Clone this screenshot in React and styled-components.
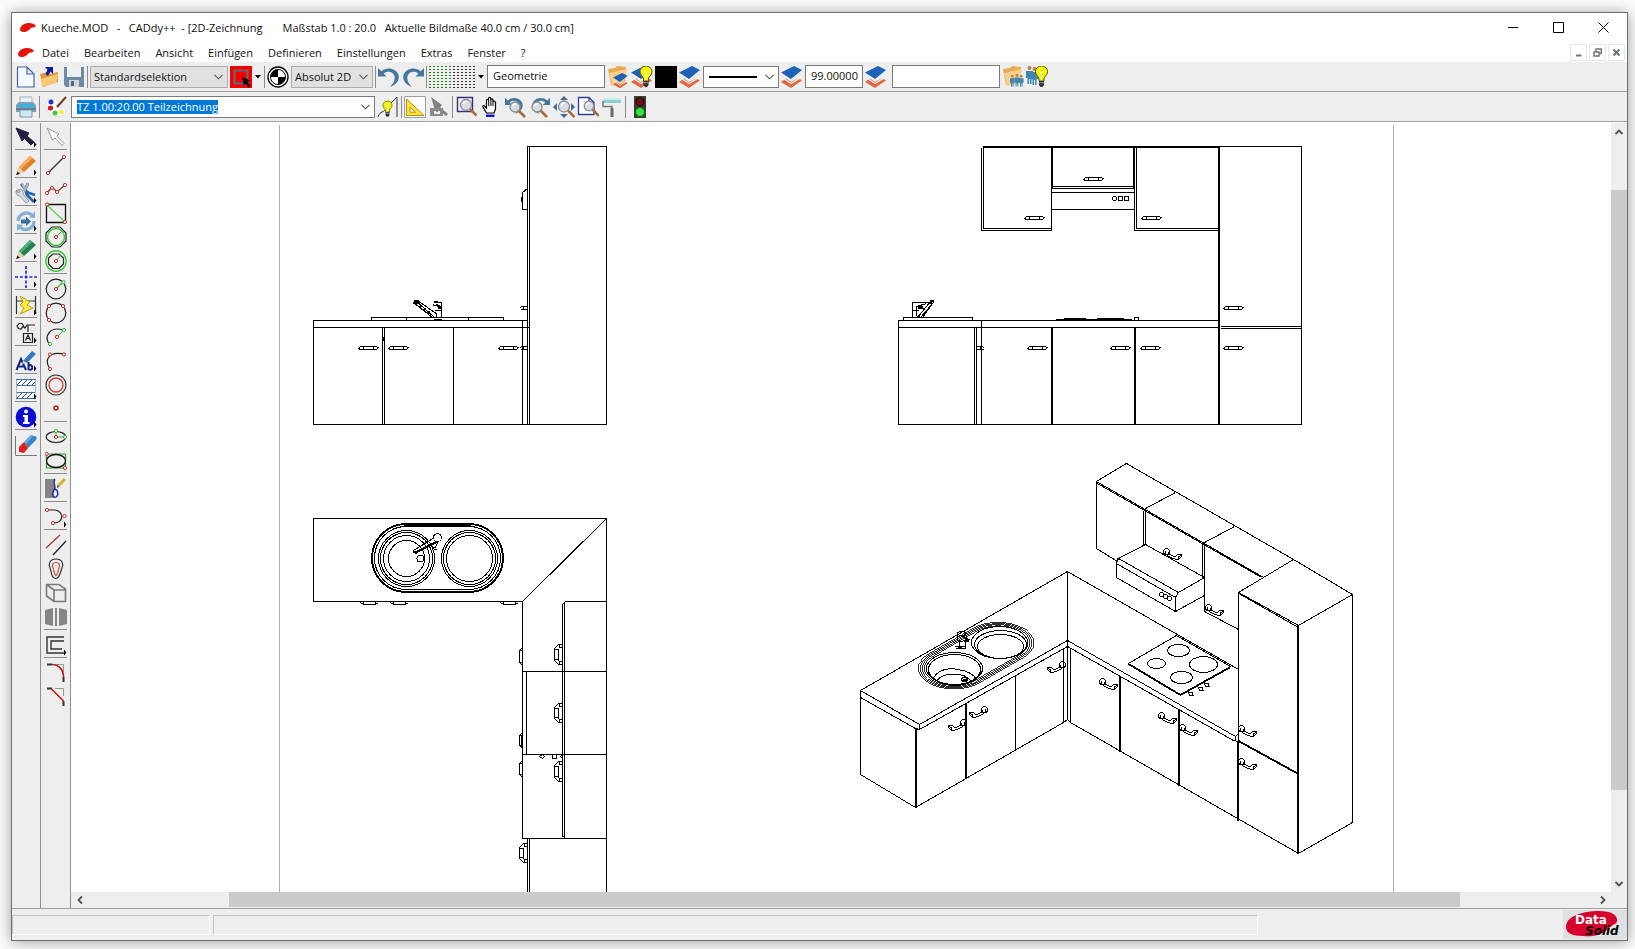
import React from 'react';
import styled, { createGlobalStyle } from 'styled-components';

const GlobalStyle = createGlobalStyle`
  *, *::before, *::after { box-sizing: border-box; }
  html, body, #root { height: 100%; }
  body {
    margin: 0;
    background: #fcfcfc;
    color: #111;
    font: 11px/16px 'Open Sans', 'Noto Sans', sans-serif;
    overflow: hidden;
  }
  button, input, select { font: inherit; color: inherit; }
`;

/* ---------- window frame ---------- */

const Desktop = styled.div`
  height: 100%;
  padding: 12px 7px 8px 11px;
`;

const Window = styled.main`
  height: 100%;
  display: flex;
  flex-direction: column;
  background: #eee;
  border: 1px solid #6e6e6e;
  box-shadow: 0 1px 14px rgba(0, 0, 0, 0.38);
`;

const TitleBar = styled.header`
  display: flex;
  align-items: center;
  height: 30px;
  padding: 0 1px 1px 8px;
  gap: 5px;
  background: #fff;
`;

const Title = styled.h1`
  margin: 0;
  flex: 1;
  font-size: 11px;
  font-weight: 400;
  white-space: pre;
`;

const CaptionButtons = styled.div`
  display: flex;
`;

const CaptionButton = styled.button`
  width: 45px;
  height: 28px;
  padding: 0;
  border: 0;
  background: none;
  display: grid;
  place-items: center;
`;

const MenuBar = styled.nav`
  display: flex;
  align-items: center;
  height: 19px;
  gap: 1px;
  padding: 0 2px 0 6px;
  background: #fff;
`;

const MenuItem = styled.button`
  padding: 0 7px;
  border: 0;
  background: none;
  white-space: nowrap;
`;

const MdiButtons = styled.div`
  display: flex;
  gap: 2px;
  margin-left: auto;
`;

const MdiButton = styled.button`
  width: 17px;
  height: 17px;
  padding: 0;
  border: 1px solid #e6e9ec;
  background: #fff;
  display: grid;
  place-items: center;
`;

/* ---------- toolbars ---------- */

const Toolbar = styled.div`
  display: flex;
  align-items: center;
  gap: 2px;
  height: 30px;
  padding-left: 3px;
  border-bottom: 1px solid #a0a0a0;
`;

const Tool = styled.button`
  flex: none;
  width: ${p => p.$width || 22}px;
  height: 22px;
  padding: 0;
  border: 0;
  background: ${p => p.$fill || 'none'};
  display: grid;
  place-items: center;
  svg { display: block; }
`;

const Separator = styled.span`
  flex: none;
  width: 1px;
  height: 22px;
  background: #8c8c8c;
`;

const Spacer = styled.span`
  width: 1px;
`;

const SelectBox = styled.span`
  position: relative;
  flex: none;
  display: flex;
  align-items: center;
  width: ${p => p.$width}px;
  height: 22px;
  border: 1px solid ${p => (p.$plain ? '#7a7a7a' : '#adadad')};
  background: ${p => (p.$plain ? '#fff' : '#e1e1e1')};
`;

const Select = styled.select`
  appearance: none;
  width: 100%;
  height: 20px;
  padding: 0 18px 0 3px;
  border: 0;
  background: none;
  outline: none;
`;

const SelectMark = styled.svg`
  position: absolute;
  right: 4px;
  top: 7px;
  pointer-events: none;
`;

const LineSample = styled.svg`
  position: absolute;
  left: 5px;
  top: 9px;
  pointer-events: none;
`;

const ComboInput = styled.input`
  field-sizing: content;
  height: 14px;
  margin-left: 5px;
  padding: 0;
  border: 0;
  outline: none;
  background: #0078d7;
  color: #fff;
  line-height: 14px;
`;

const Field = styled.input`
  flex: none;
  width: ${p => p.$width}px;
  height: 23px;
  padding: 0 0 2px 5px;
  border: 1px solid #7a7a7a;
  background: #fff;
`;

/* ---------- work area ---------- */

const WorkArea = styled.div`
  flex: 1;
  min-height: 0;
  display: flex;
  border-top: 1px solid #fff;
`;

const ToolColumn = styled.div`
  flex: none;
  width: ${p => p.$width}px;
  padding: 2px 3px 0;
  border-right: 1px solid #8f8f8f;
  display: flex;
  flex-direction: column;
`;

const SideTool = styled.button`
  flex: none;
  height: ${p => (p.$divided ? 28 : 24)}px;
  padding: 0 0 ${p => (p.$divided ? 4 : 0)}px;
  border: 0;
  background: ${p => (p.$divided ? 'linear-gradient(#8c8c8c, #8c8c8c) 0 24px / 100% 1px no-repeat' : 'none')};
  display: grid;
  place-items: center;
  svg { display: block; }
`;

const View = styled.section`
  flex: 1;
  min-width: 0;
  display: grid;
  grid-template: minmax(0, 1fr) 16px / minmax(0, 1fr) 16px;
`;

const Canvas = styled.div`
  background: #fff;
  overflow: hidden;
  svg { display: block; width: 100%; height: 100%; }
`;

const ScrollV = styled.div`
  display: grid;
  grid-template-rows: 17px 50fr 600fr 85fr 17px;
`;

const ScrollH = styled.div`
  display: grid;
  grid-template-columns: 17px 141fr 1231fr 134fr 17px;
  padding-bottom: 1px;
`;

const ScrollButton = styled.button`
  padding: 0;
  border: 0;
  background: none;
  display: grid;
  place-items: center;
`;

const Thumb = styled.div`
  background: #cbcbcb;
`;

/* ---------- status bar ---------- */

const StatusBar = styled.footer`
  display: flex;
  align-items: center;
  height: 32px;
  gap: 3px;
  border-top: 1px solid #a0a0a0;
`;

const StatusPanel = styled.div`
  width: ${p => p.$share};
  height: 20px;
  border: 1px solid #c4c4c4;
  border-right-color: #fff;
  border-bottom-color: #fff;
`;

const Brand = styled.div`
  margin-left: auto;
  width: 64px;
  height: 29px;
  background: #dfe0e2;
  svg { display: block; }
`;

/* ---------- icons (22 x 22 grid) ---------- */

const Glyph = ({ children, w = 22, h = 22 }) => (
  <svg width={w} height={h} viewBox={`0 0 ${w} ${h}`} fill="none" aria-hidden="true">{children}</svg>
);

const AppMark = () => (
  <Glyph w={16} h={10}>
    <path d="M0 6 C1 2 5 0 9 0 C12 0 15 1 16 3 C14 5 13 4 11 5 C9 7 7 9 4 9 C1 9 0 8 0 6Z" fill="#e3120b" />
  </Glyph>
);

const Chevron = () => (
  <SelectMark width="9" height="6" viewBox="0 0 9 6"><path d="M.5 .8 L4.5 4.8 L8.5 .8" fill="none" stroke="#555" strokeWidth="1.1" /></SelectMark>
);

const Caret = () => <Glyph w={6} h={4}><path d="M0 0H6L3 3.5Z" fill="#000" /></Glyph>;

const Sheets = ({ x = 0, y = 0, s = 1 }) => (
  <g transform={`translate(${x} ${y}) scale(${s})`}>
    <path d="M0 16 L5 12.5 L10 16 L17 12 L21 14.5 L10 22Z" fill="#e2673c" />
    <path d="M1 10.5 L10 17 L21 9.5 L21 11.5 L10 18 L1 12Z" fill="#fafafa" stroke="#ddd" strokeWidth=".4" />
    <path d="M0 6.5 L13 0 L21 4 L10 13Z" fill="#1d62b8" />
  </g>
);

const Bulb = ({ x = 0, y = 0, s = 1 }) => (
  <g transform={`translate(${x} ${y}) scale(${s})`}>
    <path d="M3.5 15 V12 C1 9 0 8 0 5.5 A6 5.5 0 0 1 12 5.5 C12 8 11 9 8.5 12 V15Z" fill="#f8f500" stroke="#55551a" />
    <path d="M4 5 L6 8 L8 5 M6 8V13" stroke="#fff" />
    <path d="M3.5 15H8.5V19L7 21H5L3.5 19Z" fill="#333" />
    <path d="M3.5 16.7H8.5" stroke="#999" />
  </g>
);

const Folder = () => (
  <>
    <path d="M1 3 L8 2 L10 0 L19 1 L18 17 L4 19Z" fill="#e8ab54" />
    <path d="M2 7 L20 3 L17 17 L5 20Z" fill="#f8cf8b" />
  </>
);

const People = ({ x = 0, y = 0, s = 1 }) => (
  <g transform={`translate(${x} ${y}) scale(${s})`}>
    <circle cx="3.5" cy="2" r="2" fill="#b87d52" />
    <path d="M0 5H7V12H5.500V18H4V13H3V18H1.500V12H0Z" fill="#3d87b0" />
  </g>
);

const Lens = ({ x = 9, y = 9, r = 6 }) => (
  <>
    <path d={`M${x + r * 0.7} ${y + r * 0.7} L${x + r + 5} ${y + r + 5}`} stroke="#a86b3c" strokeWidth="2.6" />
    <circle cx={x} cy={y} r={r} fill="#d9dde0" stroke="#8b8f93" strokeWidth="1.3" />
    <path d={`M${x - r * 0.5} ${y - 1} A${r * 0.6} ${r * 0.6} 0 0 1 ${x + 1} ${y - r * 0.6}`} stroke="#fff" strokeWidth="1.4" />
  </>
);

const Turn = () => (
  <path d="M0 2 V10.500 H8.500 L5.500 7.500 C9 4.500 15 5 16.500 10 C17.500 14 15 18 12 21 C18 19 22 14 20.500 9 C18.500 2.500 9 0 3.300 5.300Z" fill="#46779b" />
);

const Dot = ({ x, y, c = '#c22a22' }) => <circle cx={x} cy={y} r="1.600" fill="#fff" stroke={c} />;

const Flyout = () => <path d="M19 15.500 L21.500 18.500 L19 21.500Z" fill="#000" />;

const icons = {
  newFile: <path d="M2.500 1 H12 L19 8 V21 H2.500Z M12 1 V8 H19" fill="#f5f9ff" stroke="#3f64a8" strokeWidth="1.2" />,
  open: (
    <>
      <path d="M1 8 L8 6 L10 8 L19 6 V16 L4 21Z" fill="#e09a3d" />
      <path d="M2 13 L19 8 L17 17 L3 21Z" fill="#fbc779" />
      <path d="M6 1 H14 V8 L11.500 5.500 L9 10 L6.500 8 L8.500 3.800Z" fill="#0a1d9b" />
    </>
  ),
  save: (
    <>
      <path d="M1 1 H21 V21 H3 L1 19Z" fill="#6f8ba3" />
      <path d="M4 1 H18 V11 H4Z" fill="#eef1f3" />
      <path d="M6 14 H16 V21 H6Z" fill="#cfd5da" />
      <path d="M8 15 H11 V20 H8Z" fill="#51677a" />
    </>
  ),
  selectMode: (
    <>
      <path d="M4.500 4.500 H17.500 V17.500 H4.500Z" stroke="#5c6c72" strokeWidth="2" />
      <path d="M12 11 L20 14.500 L17.500 16 L20.500 20 L18.500 21.500 L16 17.500 L14 19.500Z" fill="#000" />
    </>
  ),
  origin: (
    <>
      <circle cx="11" cy="11" r="10" fill="#fff" stroke="#000" strokeWidth="1.300" />
      <circle cx="11" cy="11" r="7.500" fill="#fff" stroke="#000" />
      <path d="M11 11 V3.500 A7.500 7.500 0 0 0 3.500 11Z M11 11 V18.500 A7.500 7.500 0 0 0 18.500 11Z" fill="#000" />
    </>
  ),
  undo: <Turn />,
  redo: <g transform="matrix(-1 0 0 1 22 0)"><Turn /></g>,
  folderLayers: <><Folder /><Sheets x={6} y={7} s={0.7} /></>,
  layersBulb: <><Sheets /><Bulb x={9} y={0} /></>,
  layers: <Sheets />,
  folderPeople: <><Folder /><People x={8} y={9} s={0.65} /><People x={12.500} y={8} s={0.7} /><People x={17} y={9} s={0.65} /></>,
  peopleBulb: <><People x={0} y={0} /><People x={5} y={1} /><Bulb x={9.500} y={0} /></>,
  print: (
    <>
      <path d="M5 1 H17 V9 H5Z" fill="#e9eef2" stroke="#9fb0bd" />
      <path d="M1 9 L4 6 H18 L21 9 V16 H1Z" fill="#7f9db3" />
      <path d="M3 8 H19 V11 H3Z" fill="#35b5e0" />
      <path d="M5 14 H17 V21 H5Z" fill="#cfeaf6" stroke="#7a94a6" />
      <path d="M1 13 H21" stroke="#50697c" />
    </>
  ),
  palette: (
    <>
      <path d="M1 9 C1 3 8 2 12 4 C14 6 10 8 12 11 C14 13 21 10 21 15 C21 19 16 21 11 20.500 C5 20 1 16 1 9Z" fill="#fff" stroke="#ddd" />
      <circle cx="6" cy="6" r="2.500" fill="#1b35c9" /><circle cx="5.500" cy="12" r="2.600" fill="#d5181b" />
      <circle cx="10" cy="17" r="2.500" fill="#44c33e" /><circle cx="16.500" cy="16" r="2.300" fill="#f1ee2c" />
      <path d="M21 1 L12 11" stroke="#7b3a22" strokeWidth="2" />
    </>
  ),
  bulbLine: <><path d="M1 21 C3 14 7 18 10 11 L20 1 V21" stroke="#333" /><Bulb x={6} y={5} s={0.75} /></>,
  triangle: (
    <>
      <path d="M.5 .5 H21.500 V21.500 H.500Z" fill="#fff" stroke="#9f9f9f" />
      <path d="M2.500 3 L20 19.500 H2.500Z M6 11 L11.500 16.200 H6Z" fill="#ffe23b" fillRule="evenodd" stroke="#b29011" />
    </>
  ),
  edit: (
    <>
      <path d="M3 1 L14 9 L12 11 L20 18 L18 20 L10 13 L7 14Z" fill="#808080" />
      <path d="M2 12 H15 V20 H2Z" fill="#8b8b8b" /><path d="M6 15 H12 V18 H6Z" fill="#eee" /><path d="M8 13 H10 V16 H8Z" fill="#8b8b8b" />
    </>
  ),
  zoomWindow: <><path d="M2.500 1.500 H17.500 V15.500 H2.500Z" fill="#f3f3fb" stroke="#33337d" strokeWidth="1.400" /><Lens x={11} y={9} r={5.500} /></>,
  hand: (
    <>
      <path d="M6.500 17 L3 11 C2.500 9.500 4 9 5 10.500 L6.500 12 V4.500 C6.500 3 8.500 3 8.500 4.500 V2.500 C8.500 1 10.800 1 10.800 2.500 V4 C10.800 2.500 13 2.500 13 4 V6 C13.500 4.800 15.500 5 15.500 6.500 V13 L14 17Z" fill="#fff" stroke="#000" strokeWidth="1.200" />
      <path d="M8.700 4V10 M10.900 4V10 M13 6V10" stroke="#000" /><path d="M6 18.500 H14.500 V21 H6Z" fill="#1018c8" />
    </>
  ),
  zoomBack: <><g transform="scale(.85)"><Turn /></g><Lens x={10} y={11} r={5} /></>,
  zoomNext: <><g transform="matrix(-.85 0 0 .85 21 0)"><Turn /></g><Lens x={8} y={11} r={5} /></>,
  zoomAll: (
    <>
      <path d="M11 0 L15 4 H7Z M11 22 L7 18 H15Z M0 11 L4 7 V15Z M22 11 L18 7 V15Z" fill="#3f7197" />
      <Lens x={11} y={10.500} r={5.500} />
    </>
  ),
  zoomPage: <><path d="M1.500 1.500 H12 L17 6.500 V18.500 H1.500Z M12 1.500 V6.500 H17" fill="#fff" stroke="#2f3f93" strokeWidth="1.300" /><Lens x={12} y={10} r={4.800} /></>,
  roller: (
    <>
      <path d="M2 2 H20 V7 H2Z" fill="#8ccfd0" /><path d="M2 2 H20 V4 H2Z" fill="#c8eeee" />
      <path d="M2 5 V10.500 H11 V12" stroke="#777" strokeWidth="1.500" /><path d="M9.500 12 H12.500 V21 H9.500Z" fill="#6b6b6b" />
    </>
  ),
  traffic: (
    <>
      <path d="M5 0 H17 V22 H5Z" fill="#3b3b3b" />
      <circle cx="11" cy="6" r="4.200" fill="#6d0d0d" stroke="#250000" /><circle cx="11" cy="16" r="4.500" fill="#2ee53a" stroke="#146b1a" />
    </>
  ),
  pointer: <path d="M1 2 L14 7 L12 10 L19 16 L16 19 L9.500 12.500 L7 15Z" fill="#1f2040" stroke="#1f2040" />,
  pointerGhost: <path d="M2 2 L14 8 L12 10 L19 17.500 L17 19.500 L10 12 L7.500 14Z" fill="#fff" stroke="#9a9a9a" />,
  pencilOrange: (
    <>
      <path d="M2 20 L4 13 L15 2 L21 7 L9 18Z" fill="#e0802a" /><path d="M4 13 L15 2 L17.500 4 L6 15Z" fill="#f7ad58" />
      <path d="M1 21 L4 13 L9 18Z" fill="#f1cfa5" /><path d="M1 21 L2.500 17.500 L5 20Z" fill="#222" />
    </>
  ),
  pliers: (
    <>
      <path d="M6 2 L10 7 L12 13 L19 20 M13 1 L10 8 L14 11 L20 13" stroke="#2c62b2" strokeWidth="2.800" />
      <path d="M7 1 L10 8 L13 1" stroke="#aab4bd" strokeWidth="2" />
      <path d="M1 9 C5 5 9 8 8 12 L14 19 L11 21 L5 14 C2 14 1 12 1 9 L4 11 L5 9Z" fill="#d8dde0" stroke="#7b858c" strokeWidth=".8" />
    </>
  ),
  refresh: (
    <>
      <path d="M3 11 A8.500 8.500 0 0 1 17 5 M19 11 A8.500 8.500 0 0 1 5 17.500" stroke="#83b0d4" strokeWidth="3.200" />
      <path d="M14 7.500 L20 1.500 V8Z M8 15 L2 21 V14Z" fill="#83b0d4" />
      <path d="M6 9.500 H11 V6.500 L16 11.500 L11 16 V13.500 H6Z" fill="#3c719b" />
    </>
  ),
  pencilGreen: (
    <>
      <path d="M2 20 L4 13 L15 2 L21 7 L9 18Z" fill="#23804f" /><path d="M4 13 L15 2 L17.500 4 L6 15Z" fill="#4eae7b" />
      <path d="M1 21 L4 13 L9 18Z" fill="#efcfa8" /><path d="M1 21 L2.500 17.500 L5 20Z" fill="#222" />
    </>
  ),
  cross: <path d="M11 0V22 M0 11H22" stroke="#2525d8" strokeWidth="1.700" strokeDasharray="3 1.800" />,
  flash: (
    <>
      <path d="M1.500 2V20 M20.500 2V20 M2 7H20" stroke="#333" strokeWidth="1.200" />
      <path d="M5 2 L15 8 L12 11 L18 14 L5 20 L9 14 L5 11 L8 8Z" fill="#ffe93a" stroke="#a58f0a" strokeWidth=".8" />
    </>
  ),
  annotate: (
    <>
      <path d="M2 4 L4 1.500 L7 1.500 L8.500 4 L6 7 L3.500 6.500Z M8 4 L10 6 L12 3 H20 M13 3V10" stroke="#222" strokeWidth="1.200" />
      <path d="M8.500 11.500 H17.500 V20.500 H8.500Z M10.500 18.500 L13 13 L15.500 18.500 M11.500 16.500 H14.500" stroke="#222" strokeWidth="1.200" />
    </>
  ),
  lettering: (
    <>
      <path d="M1.500 20 L6 9 L11 20 M3 16.500 H9 M13.500 12V20 M13.500 16 C16 14 18 16 17 19 C16 20 14.500 20 13.500 19" stroke="#122a7d" strokeWidth="2" />
      <path d="M8 11 L17 1 L21 4 L12 13Z" fill="#3279bd" /><path d="M8 11 L12 13 L7 14Z" fill="#e9cfa6" />
    </>
  ),
  hatch: (
    <>
      <path d="M1 1.500 H21 V20.500 H1Z" fill="#f6f9fc" />
      <path d="M1 1.500 H21 M1 7.500 H21 M1 14.500 H21 M1 20.500 H21" stroke="#4472a0" />
      <path d="M2 7 L7 2 M7 7 L12 2 M12 7 L17 2 M17 7 L21 3 M2 20 L7 15 M7 20 L12 15 M12 20 L17 15" stroke="#35506e" />
      <path d="M1.500 2 V20 M20.500 2 V15" stroke="#9fb8d0" />
    </>
  ),
  info: (
    <>
      <circle cx="11" cy="11" r="10.300" fill="#0a0ad2" />
      <circle cx="11" cy="5.500" r="2" fill="#fff" /><path d="M8 9 H13 V16 H14.500 V18 H8 V16 H9.500 V11 H8Z" fill="#fff" />
    </>
  ),
  eraser: (
    <>
      <path d="M.5 2 V21.500 H22" stroke="#777" />
      <path d="M9 8 L16 1 L22 3 L21 6 L13 14Z" fill="#3b83c3" /><path d="M4 13 L9 8 L13 14 L9 19 L4 18Z" fill="#e02020" />
      <path d="M9 8 L16 1 L18 2 L11 10Z" fill="#71add9" />
    </>
  ),
  line: <><path d="M3 19 L19 3" stroke="#333" strokeWidth="1.200" /><Dot x={3} y={19} /><Dot x={19} y={3} /></>,
  polyline: <><path d="M2 15 L7 9 L12 14 L20 7" stroke="#8b2a24" strokeWidth="1.200" /><Dot x={2} y={15} /><Dot x={7} y={10} /><Dot x={12} y={14} /><Dot x={20} y={7} /></>,
  rectangle: <><path d="M1.500 2.500 H20.500 V20.500 H1.500Z" stroke="#111" strokeWidth="1.300" /><path d="M2 3 L20 20" stroke="#4fd64f" strokeWidth="1.300" /><Dot x={2} y={2.500} /><Dot x={20} y={20} /></>,
  octagonIn: <><path d="M7 1 H15 L21 7 V15 L15 21 H7 L1 15 V7Z" stroke="#222" strokeWidth="1.200" /><circle cx="11" cy="11" r="8.500" stroke="#39c839" strokeWidth="1.400" /><path d="M11 11 L17 5" stroke="#39c839" /><Dot x={11} y={11} /></>,
  octagonOut: <><circle cx="11" cy="11" r="10.200" stroke="#39c839" strokeWidth="1.400" /><path d="M8 4 H14 L18.500 8 V14 L14 18.500 H8 L3.500 14 V8Z" stroke="#222" strokeWidth="1.200" /><path d="M11 11 L16 5" stroke="#39c839" /><Dot x={11} y={11} /></>,
  circle: <><circle cx="11" cy="11" r="9.800" stroke="#222" strokeWidth="1.200" /><path d="M11 11 L18 4" stroke="#39c839" strokeWidth="1.400" /><Dot x={11} y={11} /><Dot x={18.500} y={4} c="#39b839" /></>,
  circle3: <><circle cx="11" cy="11" r="9.800" stroke="#222" strokeWidth="1.200" /><Dot x={4} y={4} /><Dot x={18} y={4} /><Dot x={4} y={18} /></>,
  arc: <><path d="M4 18 C-1 10 5 0 18 4" stroke="#222" strokeWidth="1.200" /><path d="M12 11 L18 5" stroke="#39c839" /><Dot x={12} y={11} /><Dot x={19} y={4} c="#39b839" /><Dot x={5} y={18} c="#39b839" /></>,
  arc3: <><path d="M5 19 C0 12 1 1 19 4" stroke="#222" strokeWidth="1.200" /><Dot x={5} y={19} /><Dot x={5} y={4.500} /><Dot x={19} y={4.500} /></>,
  rings: <><circle cx="11" cy="11" r="10" stroke="#333" strokeWidth="1.200" /><circle cx="11" cy="11" r="7" stroke="#d33a32" strokeWidth="1.300" /></>,
  point: <circle cx="11" cy="10" r="2" fill="#fff" stroke="#c01818" strokeWidth="1.600" />,
  ellipse: <><ellipse cx="11" cy="11" rx="9.800" ry="5.500" stroke="#222" strokeWidth="1.200" /><path d="M11 5 V11 H20" stroke="#39a839" /><Dot x={11} y={11} /><Dot x={11} y={5} c="#39b839" /><Dot x={20} y={11} c="#39b839" /></>,
  ellipseBox: <><path d="M1.500 4 H20.500 V18 H1.500Z" stroke="#2c9a2c" strokeWidth="1.200" /><ellipse cx="11" cy="11" rx="9.500" ry="6.500" stroke="#111" strokeWidth="1.300" /><Dot x={1.600} y={4} /><Dot x={20} y={18} /></>,
  area: <><path d="M0 1 H10 C7 5 12 8 9 12 C7 15 10 18 10 20 H0Z" fill="#848484" /><path d="M10 1 C7 5 12 8 9 12 C7 15 7 20 11 19 C14 17 13 12 10 11" stroke="#1b28a5" strokeWidth="1.400" /><path d="M13 8 L20 1" stroke="#d3b51f" strokeWidth="3" /><path d="M12 10 L14 9 L12.500 7Z" fill="#333" /></>,
  curve: <><path d="M2 4 H10 C19 5 19 17 9 17" stroke="#222" strokeWidth="1.200" /><Dot x={2} y={4} /><Dot x={19.500} y={10} /><Dot x={8} y={17} /></>,
  parallels: <><path d="M1 14 L15 1" stroke="#a33a3a" strokeWidth="1.300" /><path d="M8 21 L21 7" stroke="#222" strokeWidth="1.300" /></>,
  offsetCurve: <><path d="M11 1 C17 1 19 6 17 10 C15 15 15 20 11 20.500 C6 20 7 15 5 10 C3 6 5 1 11 1Z" stroke="#333" strokeWidth="1.200" /><path d="M11 4.500 C14 4.500 15.500 7 14 10 C12.500 13 13 17 11 17.500 C9 17 9.500 13 8 10 C6.500 7 8 4.500 11 4.500Z" stroke="#d04a3a" strokeWidth="1.200" /></>,
  cube: <path d="M1.500 2.500 H14 L20.500 7 V19.500 H9 L1.500 14Z M1.500 2.500 L9 8 H20.500 M9 8 V19.500" stroke="#7a7a7a" strokeWidth="1.600" />,
  mirror: <path d="M0 4 L8 2 V20 L0 18Z M10 2 H12 V20 H10Z M14 2 L22 4 V18 L14 20Z" fill="#858585" />,
  contour: <path d="M19 3 H2 V19 H19 M19 7 H6 V15 H17" stroke="#333" strokeWidth="1.400" />,
  fillet: <><path d="M10 2.500 H18.500 V10" stroke="#999" /><path d="M2 2.500 H7 M18.500 15 V20" stroke="#333" strokeWidth="2" /><path d="M7 2.500 C14 2.500 18.500 8 18.500 15" stroke="#c01818" strokeWidth="1.600" /></>,
  chamfer: <><path d="M10 2.500 H18.500 V10" stroke="#999" /><path d="M2 2.500 H7 M18.500 15 V20" stroke="#333" strokeWidth="2" /><path d="M6 2.500 L18.500 15" stroke="#c01818" strokeWidth="1.600" /></>,
};

// [label, icon, last of the column]
const leftTools = [
  ['Auswahl', 'pointer'], ['Zeichnen', 'pencilOrange'], ['Ändern', 'pliers'], ['Transformieren', 'refresh'],
  ['Hilfslinien', 'pencilGreen'], ['Hilfspunkte', 'cross'], ['Bemaßung', 'flash'], ['Symbole', 'annotate'],
  ['Beschriftung', 'lettering'], ['Schraffur', 'hatch'], ['Information', 'info'], ['Löschen', 'eraser', true],
];

// [label, icon, divider below, opens a flyout]
const drawTools = [
  ['Zeiger', 'pointerGhost', true], ['Linie', 'line'], ['Linienzug', 'polyline'], ['Rechteck', 'rectangle'],
  ['Vieleck innen', 'octagonIn'], ['Vieleck außen', 'octagonOut', true], ['Kreis', 'circle'], ['Kreis 3 Punkte', 'circle3'],
  ['Bogen', 'arc'], ['Bogen 3 Punkte', 'arc3'], ['Konzentrisch', 'rings'], ['Punkt', 'point', true],
  ['Ellipse', 'ellipse'], ['Ellipse im Rechteck', 'ellipseBox', true], ['Fläche', 'area', true],
  ['Kurve', 'curve', true, true], ['Parallele', 'parallels'], ['Äquidistante', 'offsetCurve'], ['Körper', 'cube'],
  ['Spiegeln', 'mirror', true], ['Kontur', 'contour', true, true], ['Ausrunden', 'fillet'], ['Fase', 'chamfer'],
];

const IconTool = ({ name, label, width, fill }) => (
  <Tool $width={width} $fill={fill} aria-label={label}><Glyph>{icons[name]}</Glyph></Tool>
);

const GridDots = () => (
  <Glyph w={46}>
    {Array.from({ length: 96 }, (_, i) => {
      const col = i % 12;
      return <rect key={i} x={col * 4} y={Math.floor(i / 12) * 3} width="2" height="1" fill={col < 6 ? '#1f7a1f' : '#333'} />;
    })}
  </Glyph>
);

/* ---------- kitchen drawing, in sheet coordinates ---------- */

const Grip = ({ x, y }) => (
  <path d={`M${x} ${y + 2} L${x + 2} ${y} H${x + 17} L${x + 20} ${y + 1} L${x + 18} ${y + 3} H${x + 2}Z M${x + 5} ${y}V${y + 3} M${x + 15} ${y}V${y + 3}`} />
);

const HalfGrip = ({ x, y, flip }) => (
  <path transform={`translate(${x} ${y}) scale(${flip ? -1 : 1} 1)`} d="M0 2 L2 0 H8 M1 3 H8 M4 0V3" />
);

const PlanGrip = ({ x, y, h, w = 8 }) => (
  <path d={`M${x + w} ${y} H${x + 4} L${x} ${y + 4} V${y + h - 4} L${x + 4} ${y + h} H${x + w} M${x + 4} ${y + 4} V${y + h - 4} M${x} ${y + 5} H${x + 4} M${x} ${y + h - 5} H${x + 4} M${x + 5} ${y} V${y + 3} H${x + w} M${x + 5} ${y + h} V${y + h - 3} H${x + w}`} />
);

const EdgeGrip = ({ x, y, h }) => <path d={`M${x + 3} ${y} L${x} ${y + 3} V${y + h - 3} L${x + 3} ${y + h} M${x} ${y + 3}H${x + 3} M${x} ${y + h - 3}H${x + 3}`} />;

const BottomGrip = ({ x }) => <path d={`M${x} 602 L${x + 3} 604 H${x + 15} L${x + 18} 602 M${x + 3} 601V604 M${x + 15} 601V604`} />;

const IsoGrip = ({ x, y, flip }) => (
  <g transform={`translate(${x} ${y})${flip ? ' translate(18 0) scale(-1 1)' : ''}`}>
    <ellipse cx="3" cy="3" rx="3" ry="3" />
    <path d="M2 2 V5 L5 8 M5 4 L6 7 M0 4 L2 6 M4 7 C7 9 10 11 15 11 L18 8 V6 L14 6 L12 8 C9 8 7 7 5 5 M15 11 V8 L18 7" />
  </g>
);

const Stadium = ({ inset = 0 }) => (
  <rect x={371 + inset} y={523 + inset} width={132 - 2 * inset} height={69 - 2 * inset} rx={34.500 - inset} />
);

const SideElevation = () => (
  <g>
    <path d="M527 424 V146 H606 V424 H313 V320 H527 M529 146V424 M313 327H529 M382 327V424 M384 327V424 M453 327V424 M522 320V424" />
    <path d="M371 320V317H503V320 M406 317V320 M468 317V320 M527 188 L522 192 V209 H527 M521 196V201 M383 336V340 M529 326V329" />
    <Grip x={358} y={346} /><Grip x={388} y={346} /><Grip x={498} y={346} />
    <HalfGrip x={519} y={306} /><HalfGrip x={519} y={346} />
    <path d="M415 300 L434 317 M417 300 L437 314 M414 303 L432 317 M436 312V317 M433 319H441 M433 320H441 M441 302V317 M434 310H441 M433 302H441 M433 303V305 M434 305L440 306" />
    <path d="M413 300 H418 M413 301H418 M412 302H417 M433 301H437 M436 304L440 307 M437 307H440 M421 305L419 307 M425 308L423 310 M429 311L427 313" strokeWidth="2" />
  </g>
);

const FrontElevation = () => (
  <g>
    <path d="M898 424 V320 H1218 M898 327H1218 M898 424H1301V146H982 M974 326V424 M976 326V424 M981 320V424" />
    <path d="M981 147V230H1051V146 M983 147V228H1050 M982 147H1218 M1052 186H1133 M1051 188H1134 M1051 192H1134 M1051 209H1134 M1134 146V230H1218 M1136 147V228H1218 M1220 326H1301 M1220 328H1301" />
    <path d="M1051.500 146V187 M1133.500 146V187 M1218.500 146V424 M1051.500 327V424 M1134.500 327V424" strokeWidth="2" />
    <path d="M903 320V317H972V320 M1055 319H1131 M1063 318H1085 M1096 318H1123 M1134 320V317H1138V320" />
    <path d="M912 317V302H928 M912 310H918 M917 317L930 301 M920 317L933 302 M916 315V306L926 303 M918 304V308H924 M922 317L932 303" />
    <path d="M929 300H933 M928 302H931 M917 306H922 M916 316H919" strokeWidth="2" />
    <circle cx="1114" cy="198" r="2" /><path d="M1118 196h4v4h-4z M1124 196h4v4h-4z" />
    <Grip x={1083} y={177} /><Grip x={1024} y={216} /><Grip x={1141} y={216} /><Grip x={1223} y={306} />
    <Grip x={1027} y={346} /><Grip x={1110} y={346} /><Grip x={1140} y={346} /><Grip x={1223} y={346} />
    <HalfGrip x={984} y={346} flip />
  </g>
);

const PlanView = () => (
  <g>
    <path d="M313 601V518H606V900 M313 601H522V838H606 M606 518L522 601 M564 601H606 M564 601V838 M562 603V836H564 M522 671H606 M522 754H606 M526 671V754 M527 838V900 M529 838V900 M562 603H564" />
    <BottomGrip x={360} /><BottomGrip x={390} /><BottomGrip x={500} />
    <EdgeGrip x={519} y={647} h={18} /><EdgeGrip x={519} y={732} h={16} /><EdgeGrip x={519} y={760} h={17} />
    <path d="M521 734V746" />
    <PlanGrip x={554} y={644} h={20} /><PlanGrip x={554} y={703} h={19} /><PlanGrip x={554} y={761} h={20} /><PlanGrip x={519} y={843} h={19} />
    <path d="M539 756L542 754L544 756L542 758Z M552 754V758H556V754 M560 756L562 754V758Z" />
    <Stadium /><Stadium inset={1} /><Stadium inset={3} />
    <path d="M403 525H470" strokeWidth="2" />
    {[28, 26, 23, 18].map(r => <circle key={r} cx="406" cy="558" r={r} />)}
    {[28, 26, 23].map(r => <circle key={r} cx="469" cy="558" r={r} />)}
    <circle cx="437" cy="537" r="4" /><circle cx="420" cy="558" r="3.500" />
    <path d="M413 550 L434 537 M414 552 L436 541 M415 553L438 541 M432 546L434 549H436 M438 541L434 548" />
    <path d="M412 551H416" strokeWidth="2" />
  </g>
);

const IsometricView = () => (
  <g>
    <path d="M860 690 L1067 571 L1238 669 M860 690 L919 724 L1067 640 L1235 736 L1238 733 M860 697 L915 728 M919 724V729L1067 646L1233 740L1238 741 M1235 736V740 M915 728L919 729" />
    <path d="M860 690V774L915 807L1063 722L1067 719L1070 722L1298 853L1352 822V594L1293 559L1126 463L1096 481V548L1117 561" />
    <path d="M915 728V807 M916 728V807 M1015 675V750 M1063 648V722 M1067 571V719 M1070 648V722 M1238 592V820" />
    <path d="M965.500 703V778 M1119.500 675V751 M1178.500 709V785 M1237.500 741V820 M1297.500 625V853" strokeWidth="2" />
    <path d="M1238 592L1293 559 M1352 594L1298 625L1238 592 M1240 594L1298 627 M1238 740L1298 773 M1238 741L1298 774" />
    <path d="M1096 481L1263 577 M1097 483L1261 577 M1263 577L1293 559 M1145 508L1175 492 M1204 542L1234 526 M1143 510V544 M1145 510V544 M1202 543V577 M1204 543V611L1238 629" />
    <path d="M1145 544L1118 558L1178 592L1204 577Z M1118 558L1116 562V577L1175 611V597L1116 563 M1178 592L1175 597 M1175 611L1204 595" />
    <circle cx="1161" cy="594" r="2" /><circle cx="1165" cy="596" r="2" /><circle cx="1169" cy="598" r="2" />
    <path d="M1128 663L1176 635L1230 666L1180 694Z M1128 664L1180 695L1230 667" />
    <ellipse cx="1178" cy="650" rx="11" ry="6" /><ellipse cx="1156" cy="663" rx="9" ry="5" />
    <ellipse cx="1203" cy="664" rx="14" ry="8" /><ellipse cx="1181" cy="677" rx="11" ry="6" />
    <path d="M1188 692h4v3h-3z M1190 695h3 M1198 687h4v3h-3z M1200 690h3 M1204 683h4v3h-3z M1206 686h3" />
    <g transform="matrix(.7065 -.406 .71 .41 271.1 604)">
      <Stadium inset={-1} /><Stadium inset={1} /><Stadium inset={3} /><Stadium inset={5} />
    </g>
    <ellipse cx="954" cy="668" rx="28" ry="16" /><ellipse cx="954" cy="669" rx="26" ry="15" />
    <path d="M932 679C937 669 948 667 957 669C968 670 974 675 976 679 M936 681C942 671 964 671 971 681 M940 682C948 686 962 686 968 682" />
    <ellipse cx="999" cy="642" rx="28" ry="16" /><ellipse cx="1000" cy="644" rx="26" ry="14" /><ellipse cx="1000" cy="646" rx="23" ry="12" />
    <ellipse cx="961" cy="633" rx="4" ry="2" /><ellipse cx="964" cy="679" rx="3" ry="2" />
    <path d="M957 633V640L961 641L966 639V634 M959 641V648H965V641 M954 646H964 M955 648H960 M962 636L968 639L964 641" />
    <path d="M957 646H961 M963 640H968 M962 679H967" strokeWidth="2" />
    <IsoGrip x={948} y={719} flip /><IsoGrip x={969} y={706} flip /><IsoGrip x={1047} y={661} flip />
    <IsoGrip x={1099} y={678} /><IsoGrip x={1158} y={712} /><IsoGrip x={1179} y={724} /><IsoGrip x={1238} y={725} />
    <IsoGrip x={1238} y={758} /><IsoGrip x={1163} y={548} /><IsoGrip x={1205} y={604} />
  </g>
);

const Drawing = () => (
  <svg role="img" aria-label="Küchenzeichnung">
    <g transform="translate(-70.5 -122.5)" fill="none" stroke="#000" strokeWidth="1" shapeRendering="crispEdges">
      <path d="M279 124V2000 M1393 124V2000" stroke="#b0b0b0" />
      <SideElevation />
      <FrontElevation />
      <PlanView />
      <IsometricView />
    </g>
  </svg>
);

const Arrow = ({ turn }) => (
  <Glyph w={10} h={10}><path transform={`rotate(${turn} 5 5)`} d="M1.500 7 L5 3.500 L8.500 7" stroke="#505050" strokeWidth="1.800" /></Glyph>
);

const menus = ['Datei', 'Bearbeiten', 'Ansicht', 'Einfügen', 'Definieren', 'Einstellungen', 'Extras', 'Fenster', '?'];

export default function App() {
  return (
    <>
      <GlobalStyle />
      <Desktop>
        <Window>
          <TitleBar>
            <AppMark />
            <Title>{'Kueche.MOD   -   CADdy++  - [2D-Zeichnung       Maßstab 1.0 : 20.0   Aktuelle Bildmaße 40.0 cm / 30.0 cm]'}</Title>
            <CaptionButtons>
              <CaptionButton aria-label="Minimieren"><Glyph w={11} h={11}><path d="M0 5.500H10" stroke="#000" /></Glyph></CaptionButton>
              <CaptionButton aria-label="Maximieren"><Glyph w={11} h={11}><path d="M.5 .5H10.500V10.500H.500Z" stroke="#000" /></Glyph></CaptionButton>
              <CaptionButton aria-label="Schließen"><Glyph w={11} h={11}><path d="M.5 .5L10.500 10.500M10.500 .5L.5 10.500" stroke="#000" /></Glyph></CaptionButton>
            </CaptionButtons>
          </TitleBar>
          <MenuBar>
            <AppMark />
            {menus.map(m => <MenuItem key={m}>{m}</MenuItem>)}
            <MdiButtons>
              <MdiButton aria-label="Zeichnung minimieren"><Glyph w={9} h={9}><path d="M2 7.500H7.500" stroke="#6b7480" strokeWidth="2" /></Glyph></MdiButton>
              <MdiButton aria-label="Zeichnung wiederherstellen"><Glyph w={9} h={9}><path d="M1 4H6V8H1Z M3 4V1H8.300V5.500H6" stroke="#6b7480" strokeWidth="1.400" /></Glyph></MdiButton>
              <MdiButton aria-label="Zeichnung schließen"><Glyph w={9} h={9}><path d="M1.500 1.500L7.500 7.500M7.500 1.500L1.500 7.500" stroke="#6b7480" strokeWidth="2" /></Glyph></MdiButton>
            </MdiButtons>
          </MenuBar>

          <Toolbar>
            <IconTool name="newFile" label="Neu" />
            <IconTool name="open" label="Öffnen" />
            <IconTool name="save" label="Speichern" />
            <Separator />
            <SelectBox $width={138}>
              <Select aria-label="Selektion"><option>Standardselektion</option></Select>
              <Chevron />
            </SelectBox>
            <IconTool name="selectMode" label="Selektionsmodus" fill="#f40000" />
            <Tool $width={8} aria-label="Weitere Modi"><Caret /></Tool>
            <Separator />
            <IconTool name="origin" label="Ursprung" />
            <SelectBox $width={82}>
              <Select aria-label="Koordinaten"><option>Absolut 2D</option></Select>
              <Chevron />
            </SelectBox>
            <Separator />
            <IconTool name="undo" label="Rückgängig" />
            <IconTool name="redo" label="Wiederholen" />
            <Separator />
            <Tool $width={46} aria-label="Raster"><GridDots /></Tool>
            <Tool $width={8} aria-label="Rasteroptionen"><Caret /></Tool>
            <Field $width={118} aria-label="Layer" defaultValue="Geometrie" />
            <IconTool name="folderLayers" label="Layer öffnen" />
            <IconTool name="layersBulb" label="Layer sichtbar" />
            <Tool $fill="#000" aria-label="Farbe" />
            <IconTool name="layers" label="Farbe nach Layer" />
            <SelectBox $width={76} $plain>
              <Select aria-label="Linienart"><option aria-label="Volllinie" /></Select>
              <LineSample width="48" height="2"><path d="M0 1H48" stroke="#000" strokeWidth="2" /></LineSample>
              <Chevron />
            </SelectBox>
            <IconTool name="layers" label="Linienart nach Layer" />
            <Field $width={58} aria-label="Linienbreite" defaultValue="99.00000" />
            <IconTool name="layers" label="Breite nach Layer" />
            <Spacer />
            <Field $width={108} aria-label="Gruppe" />
            <IconTool name="folderPeople" label="Gruppen" />
            <IconTool name="peopleBulb" label="Gruppen sichtbar" />
          </Toolbar>

          <Toolbar>
            <IconTool name="print" label="Drucken" />
            <Separator />
            <IconTool name="palette" label="Farben" width={27} />
            <SelectBox $width={304} $plain>
              <ComboInput role="combobox" aria-expanded="false" aria-label="Teilzeichnung" defaultValue="TZ 1.00:20.00 Teilzeichnung" />
              <Chevron />
            </SelectBox>
            <IconTool name="bulbLine" label="Hervorheben" />
            <Separator />
            <IconTool name="triangle" label="Zeichendreieck" />
            <IconTool name="edit" label="Bearbeiten" />
            <Separator />
            <IconTool name="zoomWindow" label="Fenster zoomen" />
            <IconTool name="hand" label="Verschieben" width={24} />
            <IconTool name="zoomBack" label="Zoom zurück" />
            <IconTool name="zoomNext" label="Zoom vor" />
            <IconTool name="zoomAll" label="Alles zeigen" />
            <IconTool name="zoomPage" label="Seite zeigen" />
            <IconTool name="roller" label="Neu zeichnen" />
            <Separator />
            <IconTool name="traffic" label="Status" width={24} />
          </Toolbar>

          <WorkArea>
            <ToolColumn $width={29}>
              {leftTools.map(([label, icon, last]) => (
                <SideTool key={icon} $divided={!last} aria-label={label}>
                  <Glyph>{icons[icon]}{!last && <Flyout />}</Glyph>
                </SideTool>
              ))}
            </ToolColumn>
            <ToolColumn $width={30}>
              {drawTools.map(([label, icon, divided, flyout]) => (
                <SideTool key={icon} $divided={divided} aria-label={label}>
                  <Glyph>{icons[icon]}{flyout && <Flyout />}</Glyph>
                </SideTool>
              ))}
            </ToolColumn>
            <View>
              <Canvas><Drawing /></Canvas>
              <ScrollV>
                <ScrollButton aria-label="Nach oben"><Arrow turn={0} /></ScrollButton>
                <span /><Thumb /><span />
                <ScrollButton aria-label="Nach unten"><Arrow turn={180} /></ScrollButton>
              </ScrollV>
              <ScrollH>
                <ScrollButton aria-label="Nach links"><Arrow turn={-90} /></ScrollButton>
                <span /><Thumb /><span />
                <ScrollButton aria-label="Nach rechts"><Arrow turn={90} /></ScrollButton>
              </ScrollH>
            </View>
          </WorkArea>

          <StatusBar>
            <StatusPanel $share="12.25%" />
            <StatusPanel $share="64.7%" />
            <Brand>
              <svg width="64" height="29" viewBox="0 0 64 29" role="img" aria-label="Data Solid">
                <path d="M3 17C3 6 20 1 36 1C48 1 55 5 54 11C54 14 50 14 46 18C40 25 30 27 20 26C9 26 3 23 3 17Z" fill="#d8002c" />
                <text x="12" y="14" fontFamily="'DejaVu Sans', sans-serif" fontWeight="700" fontSize="12" fill="#fff">Data</text>
                <text x="22" y="25" fontFamily="'DejaVu Sans', sans-serif" fontWeight="700" fontStyle="italic" fontSize="12" fill="#000">Solid</text>
              </svg>
            </Brand>
          </StatusBar>
        </Window>
      </Desktop>
    </>
  );
}
